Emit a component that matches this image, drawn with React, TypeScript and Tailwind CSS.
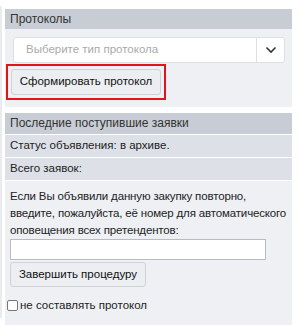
import React from "react";

export default function App() {
  return (
    <div className="w-[300px] h-[325px] bg-white flex overflow-hidden" style={{ fontFamily: '"Liberation Sans", Arial, sans-serif' }}>
      <div className="w-[2px] bg-[#e9ebef] mt-[6px] h-[312px]" />
      <div className="ml-[3px] w-[287px] pt-[9px] flex flex-col text-[11.5px] text-[#222]">
        {/* Protocols */}
        <div className="h-[21px] bg-[#c8ccd4] pl-[5px] flex items-center text-[#333] text-[12px]">Протоколы</div>
        <div className="bg-[#eef0f4] pt-[8px] pb-[7px] pl-[1px] pr-[7px] flex flex-col">
          <div className="ml-[7px] h-[26px] bg-white border border-[#dcdfe4] rounded-[3px] flex items-center">
            <div className="flex-1 pl-[12px] text-[#aaa] whitespace-nowrap">Выберите тип протокола</div>
            <div className="w-[28px] h-full border-l border-[#dcdfe4] flex items-center justify-center">
              <svg width="12" height="8" viewBox="0 0 12 8" fill="none">
                <path d="M1.5 1.5 L6 6 L10.5 1.5" stroke="#333" strokeWidth="1.6" />
              </svg>
            </div>
          </div>
          <div className="mt-[1px] w-[160px] border-[2px] border-[#e3131b] p-[3px] flex">
            <div className="flex-1 h-[26px] bg-[#eceef1] border border-[#cfd2d7] rounded-[3px] flex items-center justify-center text-[#111] whitespace-nowrap">
              Сформировать протокол
            </div>
          </div>
        </div>
        {/* Latest applications */}
        <div className="mt-[6px] h-[22px] bg-[#c8ccd4] pl-[5px] flex items-center text-[#333] text-[12px]">Последние поступившие заявки</div>
        <div className="h-[24px] bg-[#dde1e7] pl-[5px] flex items-center border-t border-white">Статус объявления: в архиве.</div>
        <div className="h-[24px] bg-[#dde1e7] pl-[5px] flex items-center border-t border-white">Всего заявок:</div>
        <div className="bg-[#eef0f4] border-t border-white pl-[5px] pt-[7px] pb-[11px] flex flex-col">
          <div className="leading-[17px] whitespace-nowrap tracking-[-0.15px]">
            Если Вы объявили данную закупку повторно,
            <br />
            введите, пожалуйста, её номер для автоматического
            <br />
            оповещения всех претендентов:
          </div>
          <div className="w-[256px] h-[21px] bg-white border border-[#b8bcc2]" />
          <div className="mt-[2px] w-[136px] h-[25px] bg-[#eceef1] border border-[#cfd2d7] rounded-[3px] flex items-center justify-center text-[#111] whitespace-nowrap">
            Завершить процедуру
          </div>
          <label className="mt-[10px] -ml-[3px] flex items-center gap-[2px]">
            <span className="w-[11px] h-[11px] border border-[#777] rounded-[2px] bg-white inline-block" />
            <span>не составлять протокол</span>
          </label>
        </div>
      </div>
    </div>
  );
}
